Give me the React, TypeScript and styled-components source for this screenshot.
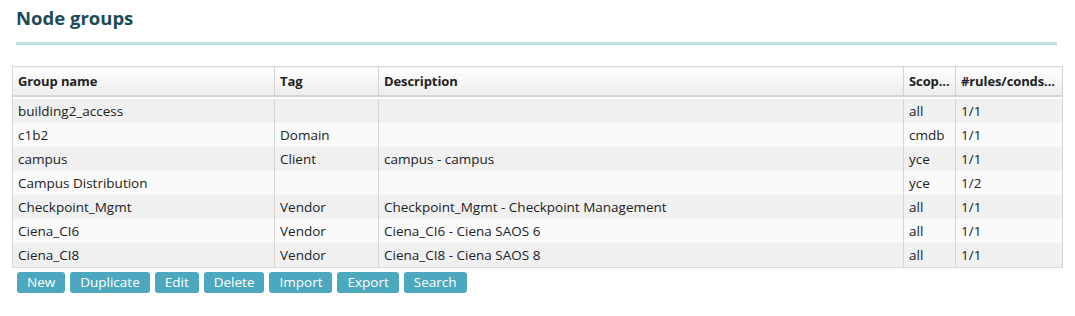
import React from "react";
import styled, { createGlobalStyle } from "styled-components";

const GlobalStyle = createGlobalStyle`
  html, body { margin: 0; padding: 0; background: #ffffff; }
  body { font-family: "Open Sans", "Noto Sans", sans-serif; color: #222; }
`;

const Page = styled.div`
  padding: 6px 13px 0 12px;
  width: 1050px;
`;

const TitleBar = styled.div`
  margin: 0 5px 0 4px;
  padding: 0 0 12px 0;
  border-bottom: 3px solid #bde3e8;
`;

const Title = styled.h1`
  margin: 0;
  font-size: 18.5px;
  line-height: 24px;
  font-weight: 700;
  color: #1b4b5a;
`;

const Table = styled.table`
  margin-top: 21px;
  width: 1050px;
  border-collapse: collapse;
  border: 1px solid #d9d9d9;
  table-layout: fixed;
  font-size: 13.5px;
`;

const HeadCell = styled.th<{ $w: number }>`
  box-sizing: border-box;
  width: ${(p) => p.$w}px;
  height: 29px;
  padding: 1px 1px 0 5px;
  text-align: left;
  font-size: 13px;
  letter-spacing: -0.1px;
  font-weight: 700;
  color: #222;
  background: linear-gradient(#ffffff, #ededed);
  border-right: 1px solid #d4d4d4;
  border-bottom: 2px solid #d4d4d4;
  white-space: nowrap;
  overflow: hidden;
  text-overflow: ellipsis;
`;

const Row = styled.tr<{ $odd: boolean }>`
  background: ${(p) => (p.$odd ? "#f0f0f0" : "#fafafa")};
`;

const Cell = styled.td`
  height: 24px;
  padding: 0 5px;
  border-right: 1px solid #d4d4d4;
  white-space: nowrap;
  overflow: hidden;
  text-overflow: ellipsis;
`;

const Spacer = styled.tr`
  height: 2px;
  background: #ffffff;
`;

const Buttons = styled.div`
  display: flex;
  gap: 5px;
  margin: 4px 0 0 5px;
`;

const Button = styled.button`
  height: 21px;
  padding: 0 10px;
  border: none;
  border-radius: 3px;
  background: #4ca8be;
  color: #ffffff;
  font-family: "Open Sans", "Noto Sans", sans-serif;
  font-size: 13.5px;
  cursor: pointer;
`;

const cols = [
  { name: "Group name", w: 262 },
  { name: "Tag", w: 104 },
  { name: "Description", w: 525 },
  { name: "Scop...", w: 52 },
  { name: "#rules/conds...", w: 107 },
];

const rows = [
  ["building2_access", "", "", "all", "1/1"],
  ["c1b2", "Domain", "", "cmdb", "1/1"],
  ["campus", "Client", "campus - campus", "yce", "1/1"],
  ["Campus Distribution", "", "", "yce", "1/2"],
  ["Checkpoint_Mgmt", "Vendor", "Checkpoint_Mgmt - Checkpoint Management", "all", "1/1"],
  ["Ciena_CI6", "Vendor", "Ciena_CI6 - Ciena SAOS 6", "all", "1/1"],
  ["Ciena_CI8", "Vendor", "Ciena_CI8 - Ciena SAOS 8", "all", "1/1"],
];

const actions = ["New", "Duplicate", "Edit", "Delete", "Import", "Export", "Search"];

export default function App() {
  return (
    <>
      <GlobalStyle />
      <Page>
        <TitleBar>
          <Title>Node groups</Title>
        </TitleBar>
        <Table>
          <thead>
            <tr>
              {cols.map((c) => (
                <HeadCell key={c.name} $w={c.w}>
                  {c.name}
                </HeadCell>
              ))}
            </tr>
          </thead>
          <tbody>
            <Spacer>
              <td colSpan={5} />
            </Spacer>
            {rows.map((r, i) => (
              <Row key={i} $odd={i % 2 === 0}>
                {r.map((v, j) => (
                  <Cell key={j}>{v}</Cell>
                ))}
              </Row>
            ))}
          </tbody>
        </Table>
        <Buttons>
          {actions.map((a) => (
            <Button key={a}>{a}</Button>
          ))}
        </Buttons>
      </Page>
    </>
  );
}
